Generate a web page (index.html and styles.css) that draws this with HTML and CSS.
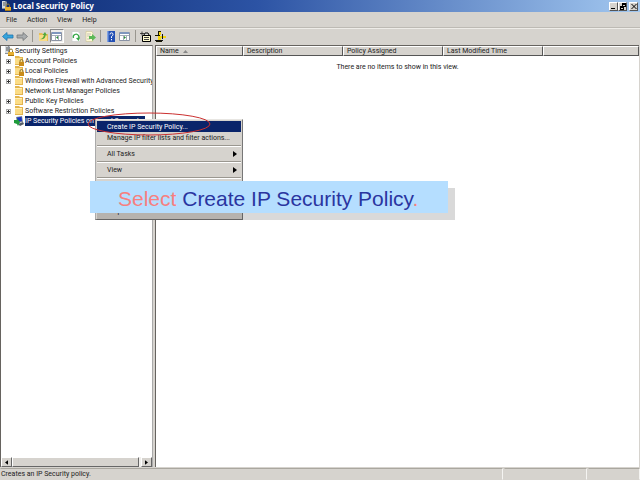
FILE: index.html
```html
<!DOCTYPE html>
<html lang="en">
<head>
    <meta charset="UTF-8">
    <meta name="viewport" content="width=device-width, initial-scale=1.0">
    <title>Local Security Policy</title>
    <link rel="stylesheet" href="styles.css">
</head>
<body>
    <!-- shared icons -->
    <svg class="sprites" aria-hidden="true">
        <symbol id="server" viewBox="0 0 10 10">
            <path d="M1 0h4l1 1v7H1z" fill="#8b939c"/>
            <path d="M1 0h3v7H1z" fill="#d5dade"/>
            <path d="M2 2h2M2 4h2" stroke="#555" stroke-width="1"/>
            <path d="M5.500 6V4.500a1.500 1.500 0 0 1 3 0V6" fill="none" stroke="#8a7430"/>
            <path d="M4 6h6v4H4z" fill="#e8b030"/>
            <path d="M4 9h6v1H4z" fill="#a87612"/>
        </symbol>
        <symbol id="folder" viewBox="0 0 10 10">
            <path d="M1 0h4l1 1h3v8H1z" fill="#e3b54e"/>
            <path d="M1 2h7v6H1z" fill="#fbdc85"/>
            <path d="M1 2h7v1H1z" fill="#fff0b8"/>
        </symbol>
        <symbol id="folder-lock" viewBox="0 0 10 10">
            <path d="M1 0h4l1 1h3v8H1z" fill="#e3b54e"/>
            <path d="M1 2h7v6H1z" fill="#fbdc85"/>
            <path d="M6 6V5a1.500 1.500 0 0 1 3 0v1" fill="none" stroke="#8a7430"/>
            <path d="M5 6h5v4H5z" fill="#c98c1a"/>
        </symbol>
        <symbol id="computer" viewBox="0 0 10 10">
            <path d="M2 1l6-1 1 6-6 1z" fill="#7c8594"/>
            <path d="M3 1.500l4.500-.5.5 4-4.500 1z" fill="#1733c8"/>
            <path d="M4 8l5-2 1 2-4 2z" fill="#555d66"/>
            <path d="M0 4h3V2.500L6 6 4 10 3 8 0 7z" fill="#1f9b3c"/>
        </symbol>
        <symbol id="pane" viewBox="0 0 11 11">
            <path d="M.5 1.500h10v8H.5z" fill="#fff" stroke="#8a93a5"/>
            <path d="M1 1h9v2H1z" fill="#7f96bd"/>
            <path d="M1 4.500h9M4.500 4v5M7.500 4v5" stroke="#a5adb8"/>
        </symbol>
    </svg>

    <div class="window">
        <header class="titlebar">
            <svg class="icon"><use href="#server"/></svg>
            <h1>Local Security Policy</h1>
            <div class="controls">
                <button type="button" aria-label="Minimize"><svg viewBox="0 0 8 7"><path d="M1 5h4v1H1z"/></svg></button>
                <button type="button" aria-label="Restore"><svg viewBox="0 0 8 7"><path d="M3 0h4v4H5V3h1V2H4v1H3zM1 3h4v4H1zM2 5v1h2V5z" fill-rule="evenodd"/></svg></button>
                <button type="button" class="close" aria-label="Close"><svg viewBox="0 0 8 7"><path d="M1.500 1l5 5M6.500 1l-5 5" stroke="#000" fill="none"/></svg></button>
            </div>
        </header>

        <nav class="menubar">
            <button type="button">File</button>
            <button type="button">Action</button>
            <button type="button">View</button>
            <button type="button">Help</button>
        </nav>

        <div class="toolbar">
            <button type="button" aria-label="Back"><svg viewBox="0 0 12 11"><path d="M.5 5.500L5 1.500v2.500h6v3H5v2.500z" fill="#35a5dd" stroke="#2273ad" stroke-width=".8"/></svg></button>
            <button type="button" class="forward" aria-label="Forward"><svg viewBox="0 0 12 11"><path d="M11.500 5.500L7 1.500v2.500H1v3h6v2.500z" fill="#a9acae" stroke="#73777a" stroke-width=".8"/></svg></button>
            <span class="divider"></span>
            <button type="button" aria-label="Up one level"><svg viewBox="0 0 12 11"><path d="M2 2h3l1 1h5v7H2z" fill="#e9bf57"/><path d="M2 4h8v6H2z" fill="#f9dc87"/><path d="M3 8q3 0 4-4L5.500 4 8 1l2 3.500-1.300-.3Q8 9 3 8z" fill="#53a83c"/></svg></button>
            <button type="button" class="pressed" aria-label="Show console tree"><svg viewBox="0 0 12 11"><use href="#pane" width="11" height="11"/><path d="M7 5v3L5 6.500z" fill="#258c34"/></svg></button>
            <button type="button" class="refresh" aria-label="Refresh"><svg viewBox="0 0 12 11"><path d="M2 .5h6l2 2v8H2z" fill="#fff" stroke="#c9ccc9" stroke-width=".7"/><path d="M3.500 7a2.800 2.800 0 1 1 4.500 1" fill="none" stroke="#38a847" stroke-width="1.300"/><path d="M6 7l4-.5L8.500 10z" fill="#38a847"/></svg></button>
            <button type="button" aria-label="Export list"><svg viewBox="0 0 12 11"><path d="M2 .5h6l1 2v8H2z" fill="#fff8d6" stroke="#cdc79e" stroke-width=".7"/><path d="M3 3h4M3 5h3M3 8h3" stroke="#aaa" stroke-width=".7"/><path d="M5 5h3V3l4 3.500L8 10V8H5z" fill="#5cb957"/></svg></button>
            <span class="divider"></span>
            <button type="button" aria-label="Help"><svg viewBox="0 0 12 11"><path d="M2 0h8v11H2z" fill="#2450b4"/><path d="M2 0h1.500v11H2z" fill="#82a3e2"/><path d="M5 3.500q0-1.700 1.500-1.700T8 3.500q0 1-1.500 2V7M6.500 8v1.300" fill="none" stroke="#fff"/></svg></button>
            <button type="button" aria-label="Show action pane"><svg viewBox="0 0 12 11"><use href="#pane" width="11" height="11"/><path d="M5 5v3l2-1.500z" fill="#258c34"/></svg></button>
            <span class="divider"></span>
            <button type="button" aria-label="Create policy"><svg viewBox="0 0 12 11"><path d="M2.500 4.500h8v6h-8z" fill="#fffbd0" stroke="#000"/><path d="M4 4l1-2h3l1 2" fill="#ddd" stroke="#000"/><path d="M4 6.500h5M4 8.500h5" stroke="#444"/><path d="M0 2.500h4M2 .5v4" stroke="#222" stroke-width=".8"/></svg></button>
            <button type="button" aria-label="Manage filters"><svg viewBox="0 0 12 11"><path d="M4 0h3v4H4zM1 4h5v1H1zM2 9h6v2H2z" fill="#161600"/><path d="M5 1h2v3H5zM4 5h3v4H4zM7 5h5v2H7z" fill="#f4d512"/><path d="M8 3h1v5H8zM1 9h8v1H1z" fill="#111"/></svg></button>
        </div>

        <main class="panes">
            <section class="tree-pane">
                <ul class="tree">
                    <li class="root"><svg class="icon"><use href="#server"/></svg><span>Security Settings</span></li>
                    <li><button type="button" class="expander" aria-label="Expand"></button><svg class="icon"><use href="#folder-lock"/></svg><span>Account Policies</span></li>
                    <li><button type="button" class="expander" aria-label="Expand"></button><svg class="icon"><use href="#folder-lock"/></svg><span>Local Policies</span></li>
                    <li><button type="button" class="expander" aria-label="Expand"></button><svg class="icon"><use href="#folder"/></svg><span>Windows Firewall with Advanced Security</span></li>
                    <li class="leaf"><svg class="icon"><use href="#folder"/></svg><span>Network List Manager Policies</span></li>
                    <li><button type="button" class="expander" aria-label="Expand"></button><svg class="icon"><use href="#folder"/></svg><span>Public Key Policies</span></li>
                    <li><button type="button" class="expander" aria-label="Expand"></button><svg class="icon"><use href="#folder"/></svg><span>Software Restriction Policies</span></li>
                    <li class="leaf selected"><svg class="icon"><use href="#computer"/></svg><span>IP Security Policies on Local Computer</span></li>
                </ul>
                <div class="scrollbar">
                    <button type="button" aria-label="Scroll left"><svg viewBox="0 0 4 6"><path d="M4 0v6L0 3z"/></svg></button>
                    <div class="thumb"></div>
                    <button type="button" aria-label="Scroll right"><svg viewBox="0 0 4 6"><path d="M0 0v6l4-3z"/></svg></button>
                </div>
            </section>

            <section class="list-pane">
                <table class="list">
                    <thead>
                        <tr>
                            <th class="name">Name <svg class="sort" viewBox="0 0 5 3"><path d="M0 3h5L2.500 0z"/></svg></th>
                            <th>Description</th>
                            <th>Policy Assigned</th>
                            <th>Last Modified Time</th>
                            <th class="rest"></th>
                        </tr>
                    </thead>
                    <tbody>
                        <tr><td colspan="5">There are no items to show in this view.</td></tr>
                    </tbody>
                </table>
            </section>
        </main>

        <footer class="statusbar">
            <p>Creates an IP Security policy.</p>
            <span class="cell"></span>
            <span class="cell small"></span>
        </footer>

        <div class="context-menu">
            <button type="button" class="active">Create IP Security Policy...</button>
            <button type="button">Manage IP filter lists and filter actions...</button>
            <hr>
            <button type="button">All Tasks <svg viewBox="0 0 4 6"><path d="M0 0v6l4-3z"/></svg></button>
            <hr>
            <button type="button">View <svg viewBox="0 0 4 6"><path d="M0 0v6l4-3z"/></svg></button>
            <hr>
            <button type="button" class="last">Help</button>
        </div>

        <svg class="ring" viewBox="0 0 124 24" aria-hidden="true"><ellipse cx="62" cy="12" rx="61" ry="11"/></svg>

        <p class="callout"><em>Select</em> Create IP Security Policy<em>.</em></p>
    </div>
</body>
</html>
```
FILE: styles.css
```css
* {
  box-sizing: border-box;
}

body {
  margin: 0;
  font-family: Roboto, Tahoma, sans-serif;
  font-size: 7px;
  line-height: 10px;
  color: #222;
  background-color: #d6d3ce;
}

button {
  margin: 0;
  padding: 0;
  border: none;
  background: none;
  font: inherit;
  color: inherit;
}

svg {
  display: block;
}

.sprites {
  display: none;
}

.icon {
  width: 10px;
  height: 10px;
  flex: none;
}

.window {
  position: relative;
  display: flex;
  flex-direction: column;
  height: 100vh;
  overflow: hidden;
}

/* title bar */
.titlebar {
  display: flex;
  align-items: center;
  gap: 2px;
  height: 12px;
  padding: 0 2px 0 1px;
  background: linear-gradient(to right, #0c2a72, #2c53a4 40%, #a3c8f0);
}

.titlebar h1 {
  flex: 1;
  margin: 0;
  font-family: "Noto Sans", Tahoma, sans-serif;
  font-size: 8px;
  line-height: 12px;
  color: #fff;
}

.controls {
  display: flex;
}

.controls button {
  width: 9px;
  height: 9px;
  background-color: #d6d3ce;
  border: 1px solid;
  border-color: #fff #555 #555 #fff;
}

.controls svg {
  width: 8px;
  height: 7px;
}

.controls .close {
  margin-left: 2px;
}

/* menu bar and toolbar */
.menubar {
  display: flex;
  gap: 10px;
  height: 16px;
  padding: 3px 6px 2px;
  border-bottom: 1px solid #bdbab4;
}

.toolbar {
  display: flex;
  align-items: center;
  height: 15px;
  padding: 0 1px;
  border-top: 1px solid #eeece8;
}

.toolbar button {
  display: flex;
  align-items: center;
  justify-content: center;
  width: 14px;
  height: 14px;
}

.toolbar svg {
  flex: none;
  width: 12px;
  height: 11px;
}

.toolbar .pressed {
  background-color: #efedea;
  border: 1px solid;
  border-color: #888 #fff #fff #888;
}

.toolbar .refresh {
  margin-left: 5px;
}

.divider {
  width: 1px;
  height: 12px;
  margin: 0 3px;
  background-color: #99968f;
}

/* panes */
.panes {
  flex: 1;
  display: flex;
  gap: 2px;
  min-height: 0;
  margin-top: 2px;
}

.tree-pane,
.list-pane {
  background-color: #fff;
  border-top: 1px solid #66635f;
  border-left: 1px solid #66635f;
}

.tree-pane {
  display: flex;
  flex-direction: column;
  width: 153px;
  border-right: 1px solid #aaa;
}

.tree {
  flex: 1;
  margin: 0;
  padding: 0;
  list-style: none;
  overflow: hidden;
}

.tree li {
  display: flex;
  align-items: center;
  gap: 1px;
  height: 10px;
  padding-left: 5px;
  white-space: nowrap;
}

.tree .root {
  padding-left: 3px;
}

.tree .leaf {
  padding-left: 13px;
}

.selected span {
  background-color: #0a246a;
  color: #fff;
}

.expander {
  flex: none;
  width: 5px;
  height: 5px;
  margin-right: 2px;
  border: 1px solid #aaa;
  background: linear-gradient(#333, #333) center / 3px 1px no-repeat, linear-gradient(#333, #333) center / 1px 3px no-repeat;
}

.scrollbar {
  display: flex;
  height: 10px;
  background-color: #f0eeeb;
}

.scrollbar button,
.thumb {
  background-color: #d6d3ce;
  border: 1px solid;
  border-color: #fff #666 #666 #fff;
}

.scrollbar button {
  display: flex;
  align-items: center;
  justify-content: center;
  width: 11px;
}

.scrollbar svg {
  width: 3px;
  height: 5px;
}

.thumb {
  flex: 1;
  margin-right: 2px;
}

.list-pane {
  flex: 1;
  margin-right: 1px;
}

.list {
  width: 100%;
  border-collapse: separate;
  border-spacing: 0;
  table-layout: fixed;
}

.list th {
  width: 100px;
  height: 10px;
  padding: 0 3px;
  font-weight: normal;
  text-align: left;
  line-height: 8px;
  background-color: #d6d3ce;
  border: 1px solid;
  border-color: #fff #555 #555 #fff;
}

.list .name {
  width: 87px;
}

.list .rest {
  width: auto;
}

.sort {
  display: inline-block;
  width: 5px;
  height: 3px;
  margin-left: 3px;
  fill: #888;
  vertical-align: middle;
}

.list td {
  padding: 6px 0;
  text-align: center;
}

/* status bar */
.statusbar {
  display: flex;
  gap: 1px;
  height: 13px;
  padding-top: 1px;
}

.statusbar p {
  flex: 1;
  margin: 0;
}

.statusbar p,
.cell {
  border: 1px solid;
  border-color: #aaa79f #f5f4f2 #d6d3ce #d6d3ce;
}

.cell {
  width: 83px;
}

.cell.small {
  width: 52px;
}

/* context menu */
.context-menu {
  position: absolute;
  top: 119px;
  left: 95px;
  width: 148px;
  height: 101px;
  display: flex;
  flex-direction: column;
  padding: 1px;
  background-color: #d6d3ce;
  border: 1px solid;
  border-color: #e8e6e2 #777 #777 #aaa;
}

.context-menu button {
  display: flex;
  align-items: center;
  justify-content: space-between;
  height: 11px;
  padding: 0 4px 0 10px;
  white-space: nowrap;
}

.context-menu .active {
  background-color: #0a246a;
  color: #fff;
}

.context-menu svg {
  width: 4px;
  height: 6px;
}

.context-menu hr {
  width: 100%;
  height: 2px;
  margin: 2px 0 1px;
  border: none;
  border-top: 1px solid #9a9790;
  background-color: #fff;
}

.context-menu .last {
  margin: auto 0 2px;
}

.ring {
  position: absolute;
  top: 112px;
  left: 87px;
  width: 124px;
  height: 24px;
  fill: none;
  stroke: #cb3030;
}

.callout {
  position: absolute;
  top: 181px;
  left: 90px;
  margin: 0;
  padding: 2px 30px 0 28px;
  height: 32px;
  font-family: "Liberation Sans", Arial, sans-serif;
  font-size: 21px;
  line-height: 32px;
  white-space: nowrap;
  color: #2a35a0;
  background-color: #b5deff;
  box-shadow: 7px 7px 0 rgba(0, 0, 0, 0.15);
}

.callout em {
  font-style: normal;
  color: #f77f80;
}
```
